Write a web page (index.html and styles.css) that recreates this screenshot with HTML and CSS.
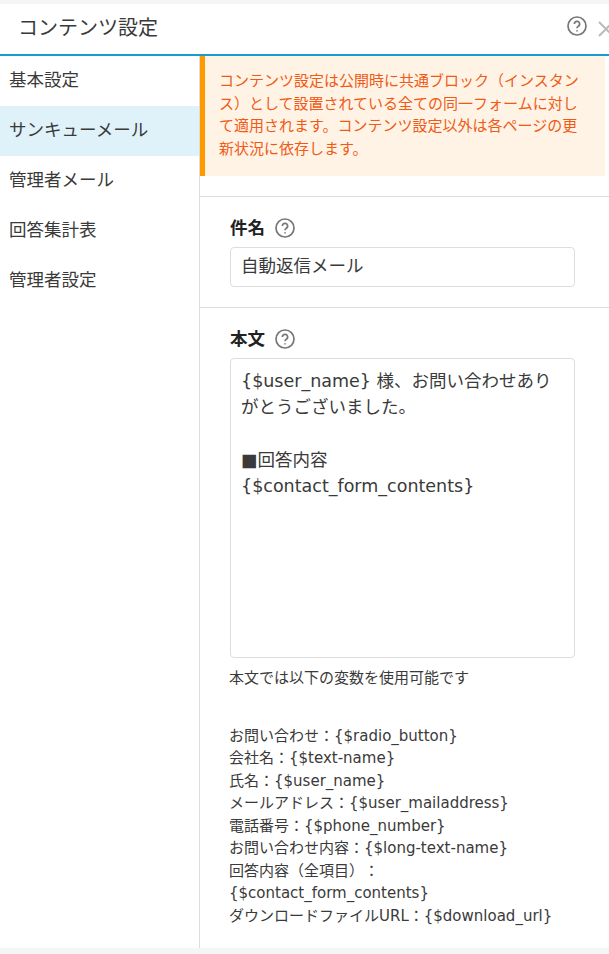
FILE: index.html
```html
<!DOCTYPE html>
<html lang="ja">
<head>
  <meta charset="UTF-8">
  <meta name="viewport" content="width=device-width, initial-scale=1">
  <title>コンテンツ設定</title>
  <link rel="stylesheet" href="styles.css">
</head>
<body>

  <div class="dialog">
    <div class="dialog-header">
      <h1>コンテンツ設定</h1>
      <div class="header-icons">
        <svg class="help-icon top" viewBox="0 0 20 20"><circle cx="10" cy="10" r="9"/><path d="M7.4 8a2.6 2.6 0 1 1 3.9 2.2c-.9.5-1.3 1-1.3 2"/><path d="M10 14.2v1.4"/></svg>
        <svg class="close-icon" viewBox="0 0 16 16"><path d="M1 1l14 14M15 1L1 15"/></svg>
      </div>
    </div>

    <div class="dialog-body">
      <ul class="side-nav">
        <li>基本設定</li>
        <li class="active">サンキューメール</li>
        <li>管理者メール</li>
        <li>回答集計表</li>
        <li>管理者設定</li>
      </ul>

      <div class="content">
        <div class="notice">コンテンツ設定は公開時に共通ブロック（インスタンス）として設置されている全ての同一フォームに対して適用されます。コンテンツ設定以外は各ページの更新状況に依存します。</div>

        <div class="section">
          <div class="field-label">件名
            <svg class="help-icon" viewBox="0 0 20 20"><circle cx="10" cy="10" r="9"/><path d="M7.4 8a2.6 2.6 0 1 1 3.9 2.2c-.9.5-1.3 1-1.3 2"/><path d="M10 14.2v1.4"/></svg>
          </div>
          <input class="text-input" type="text" value="自動返信メール">
        </div>

        <div class="section">
          <div class="field-label">本文
            <svg class="help-icon" viewBox="0 0 20 20"><circle cx="10" cy="10" r="9"/><path d="M7.4 8a2.6 2.6 0 1 1 3.9 2.2c-.9.5-1.3 1-1.3 2"/><path d="M10 14.2v1.4"/></svg>
          </div>
          <textarea class="text-area">{$user_name} 様、お問い合わせありがとうございました。

■回答内容
{$contact_form_contents}</textarea>
          <p class="hint">本文では以下の変数を使用可能です</p>
          <p class="vars">お問い合わせ：{$radio_button}<br>会社名：{$text-name}<br>氏名：{$user_name}<br>メールアドレス：{$user_mailaddress}<br>電話番号：{$phone_number}<br>お問い合わせ内容：{$long-text-name}<br>回答内容（全項目）：<br>{$contact_form_contents}<br>ダウンロードファイルURL：{$download_url}</p>
        </div>
      </div>
    </div>
  </div>

</body>
</html>
```

FILE: styles.css
```css
html, body {
  height: 100%;
}
body {
  margin: 0;
  padding: 4px 0 6px;
  box-sizing: border-box;
  background: #f5f5f5;
  color: #3a3a3a;
  font-family: "DejaVu Sans", "Noto Sans CJK JP", sans-serif;
  font-size: 15px;
  line-height: 1.5;
  text-spacing-trim: space-all;
  overflow: hidden;
}
.dialog {
  display: flex;
  flex-direction: column;
  height: 100%;
  background: #fff;
}
.dialog-header {
  display: flex;
  align-items: center;
  justify-content: space-between;
  flex: none;
  height: 50px;
  padding-left: 18px;
  border-bottom: 2px solid #1a9ccf;
  overflow: hidden;
}
.dialog-header h1 {
  margin: -3px 0 0;
  font-size: 20px;
  font-weight: normal;
}
.header-icons {
  display: flex;
  align-items: center;
  gap: 11px;
  margin-right: -5px;
}
.help-icon {
  width: 20px;
  height: 20px;
  fill: none;
  stroke: #777;
  stroke-width: 1.7;
}
.help-icon.top {
  margin-top: -6px;
}
.close-icon {
  width: 16px;
  height: 16px;
  fill: none;
  stroke: #bbb;
  stroke-width: 2;
}
.dialog-body {
  display: flex;
  flex: 1;
  min-height: 0;
}
.side-nav {
  flex: none;
  width: 199px;
  margin: 0;
  padding: 0;
  border-right: 1px solid #ddd;
  list-style: none;
  font-size: 17.5px;
}
.side-nav li {
  height: 50px;
  padding-left: 9px;
  line-height: 48px;
}
.side-nav .active {
  background: #dff2f9;
}
.content {
  flex: 1;
  min-width: 0;
}
.notice {
  height: 120px;
  box-sizing: border-box;
  margin-right: 4px;
  padding: 14px 14px 0;
  border-left: 5px solid #ff9900;
  background: #fff3e6;
  color: #f05a14;
}
.section {
  padding: 20px 34px 20px 30px;
  border-top: 1px solid #ddd;
}
.notice + .section {
  margin-top: 20px;
}
.field-label {
  display: flex;
  align-items: center;
  gap: 10px;
  height: 30px;
  margin: -4px 0 4px;
  color: #222;
  font-size: 17.5px;
  font-weight: bold;
}
.text-input,
.text-area {
  display: block;
  box-sizing: border-box;
  width: 345px;
  padding: 0 10px;
  border: 1px solid #ddd;
  border-radius: 4px;
  color: #3a3a3a;
  font-family: inherit;
  font-size: 17.5px;
  line-height: 1.5;
}
.text-input {
  height: 40px;
  padding-bottom: 5px;
}
.text-area {
  height: 300px;
  padding-top: 9px;
  resize: none;
}
.hint {
  margin: 9px 0 35px -1px;
}
.vars {
  margin: 0 0 0 -1px;
}
```
